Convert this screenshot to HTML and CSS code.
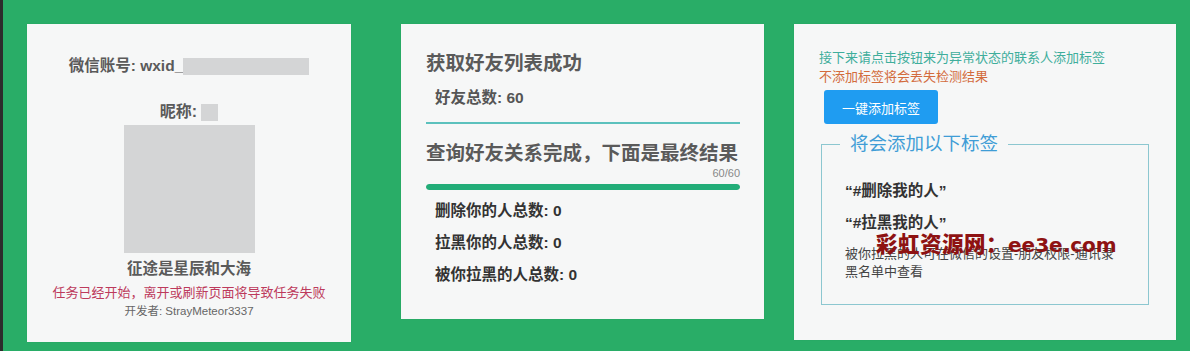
FILE: index.html
```html
<!DOCTYPE html>
<html lang="zh-CN">
<head>
<meta charset="utf-8">
<title>微信好友检测</title>
<link rel="stylesheet" href="styles.css">
</head>
<body>
<div class="page">
  <section class="card card-user">
    <div class="account">微信账号: wxid_<span class="mask mask-id"></span></div>
    <div class="nick">昵称: <span class="mask mask-nick"></span></div>
    <div class="avatar"></div>
    <div class="motto">征途是星辰和大海</div>
    <div class="warn">任务已经开始，离开或刷新页面将导致任务失败</div>
    <div class="dev">开发者: StrayMeteor3337</div>
  </section>

  <section class="card card-result">
    <h2 class="title">获取好友列表成功</h2>
    <div class="stat stat-total">好友总数: 60</div>
    <div class="divider"></div>
    <h2 class="title title-2">查询好友关系完成，下面是最终结果</h2>
    <div class="progress-label">60/60</div>
    <div class="progress"><div class="progress-fill" style="width:100%"></div></div>
    <div class="stat stat-first">删除你的人总数: 0</div>
    <div class="stat stat-next">拉黑你的人总数: 0</div>
    <div class="stat stat-next">被你拉黑的人总数: 0</div>
  </section>

  <section class="card card-tags">
    <div class="hint">接下来请点击按钮来为异常状态的联系人添加标签</div>
    <div class="hint-warn">不添加标签将会丢失检测结果</div>
    <button class="btn">一键添加标签</button>
    <fieldset class="tagbox">
      <legend class="tagbox-title">将会添加以下标签</legend>
      <div class="tagbox-body">
        <div class="tag">“#删除我的人”</div>
        <div class="tag tag-next">“#拉黑我的人”</div>
        <p class="tag-desc">被你拉黑的人可在微信的设置-朋友权限-通讯录黑名单中查看</p>
      </div>
    </fieldset>
    <div class="watermark"><span class="wm-cn">彩虹资源网：</span><span class="wm-en">ee3e.com</span></div>
  </section>
</div>
</body>
</html>
```

FILE: styles.css
```css
* { box-sizing: border-box; }

html, body {
  margin: 0;
  padding: 0;
}

body {
  width: 1190px;
  height: 351px;
  overflow: hidden;
  background: #29ad67;
  border-left: 3px solid #2c2c2c;
  font-family: "Liberation Sans", "Noto Sans CJK SC", sans-serif;
  color: #555;
}

.page {
  display: flex;
  align-items: flex-start;
  padding: 24px 0 0 24px;
}

.card {
  background: #f6f7f7;
  box-shadow: 0 0 1px rgba(0,0,0,0.08);
  flex: none;
}

/* card 1 */
.card-user {
  width: 324px;
  height: 318px;
  margin-right: 50px;
  display: flex;
  flex-direction: column;
  align-items: center;
  padding-top: 32px;
}

.account {
  font-size: 15.5px;
  font-weight: 700;
  line-height: 20px;
  color: #5a5a5a;
  display: flex;
  align-items: center;
}

.mask {
  display: inline-block;
  background: #d4d5d6;
}

.mask-id {
  width: 126px;
  height: 17px;
}

.nick {
  margin-top: 26px;
  font-size: 16px;
  font-weight: 700;
  line-height: 20px;
  color: #5a5a5a;
  display: flex;
  align-items: center;
  gap: 4px;
}

.mask-nick {
  width: 17px;
  height: 17px;
}

.avatar {
  margin-top: 3px;
  width: 131px;
  height: 128px;
  background: #d4d5d6;
}

.motto {
  margin-top: 6px;
  font-size: 15.5px;
  font-weight: 700;
  line-height: 20px;
  color: #5a5a5a;
}

.warn {
  margin-top: 5px;
  font-size: 13px;
  line-height: 18px;
  color: #bd3a5c;
}

.dev {
  margin-top: 1px;
  font-size: 11.5px;
  line-height: 16px;
  color: #666;
}

/* card 2 */
.card-result {
  width: 363px;
  height: 295px;
  margin-right: 30px;
  padding: 25px 24px 0 25px;
}

.title {
  margin: 0;
  font-size: 19.5px;
  font-weight: 700;
  line-height: 28px;
  color: #5a5a5a;
}

.title-2 {
  margin-top: 16px;
  line-height: 26px;
}

.stat {
  padding-left: 9px;
  font-size: 15.5px;
  font-weight: 700;
  line-height: 20px;
  color: #333;
}

.stat-total {
  margin-top: 11px;
  color: #555;
}

.stat-first { margin-top: 11px; }
.stat-next { margin-top: 12px; }

.divider {
  margin-top: 14px;
  height: 2px;
  background: #5cc1bd;
}

.progress-label {
  text-align: right;
  font-size: 11px;
  line-height: 14px;
  color: #888;
}

.progress {
  margin-top: 4px;
  height: 6px;
  border-radius: 3px;
  background: #e2e2e2;
  overflow: hidden;
}

.progress-fill {
  height: 100%;
  border-radius: 3px;
  background: #22ad78;
}

/* card 3 */
.card-tags {
  position: relative;
  width: 382px;
  height: 316px;
  padding: 24px 0 0 25px;
}

.hint {
  font-size: 13px;
  line-height: 19px;
  color: #3fae9c;
}

.hint-warn {
  font-size: 13px;
  line-height: 19px;
  color: #d36b3c;
}

.btn {
  display: block;
  margin: 4px 0 0 5px;
  width: 114px;
  height: 34px;
  border: none;
  border-radius: 3px;
  background: #1f9cf1;
  color: #fff;
  font-family: "Liberation Sans", "Noto Sans CJK SC", sans-serif;
  font-size: 13px;
  padding: 0;
}

.tagbox {
  margin: 8px 0 0 2px;
  width: 328px;
  padding: 0;
  border: 1px solid #8cc7d0;
  min-width: 0;
}

.tagbox-title {
  margin-left: 18px;
  padding: 0 10px;
  font-size: 18.5px;
  line-height: 24px;
  color: #3f9dd6;
}

.tagbox-body {
  padding: 25px 28px 23px 23px;
}

.tag {
  font-size: 15.5px;
  font-weight: 700;
  line-height: 20px;
  color: #333;
}

.tag-next { margin-top: 12px; }

.tag-desc {
  margin: 12px 0 0;
  font-size: 13px;
  line-height: 18px;
  color: #444;
}

.watermark {
  position: absolute;
  left: 82px;
  top: 206px;
  display: flex;
  align-items: baseline;
  color: #8e1212;
  white-space: nowrap;
  line-height: 26px;
}

.wm-cn {
  font-family: "Noto Sans CJK SC", sans-serif;
  font-weight: 900;
  font-size: 21.5px;
  letter-spacing: 0.5px;
}

.wm-en {
  font-family: "DejaVu Sans", sans-serif;
  font-weight: 700;
  font-size: 20px;
}
```
